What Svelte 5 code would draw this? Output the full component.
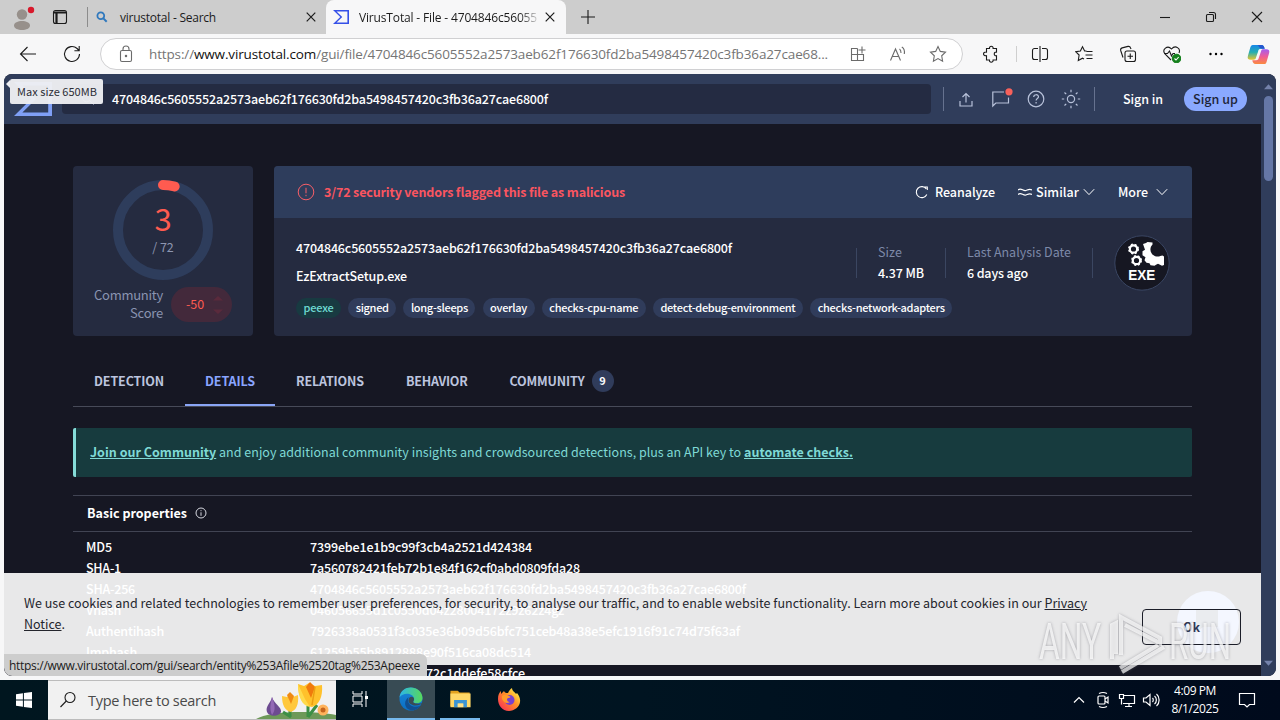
<script lang="ts">
	const hash = '4704846c5605552a2573aeb62f176630fd2ba5498457420c3fb36a27cae6800f';

	const tags = [
		{ name: 'peexe', width: 30, active: true },
		{ name: 'signed', width: 33 },
		{ name: 'long-sleeps', width: 57 },
		{ name: 'overlay', width: 37 },
		{ name: 'checks-cpu-name', width: 89 },
		{ name: 'detect-debug-environment', width: 135 },
		{ name: 'checks-network-adapters', width: 127 }
	];

	const tabs = [
		{ name: 'DETECTION', width: 70 },
		{ name: 'DETAILS', width: 50, active: true },
		{ name: 'RELATIONS', width: 68 },
		{ name: 'BEHAVIOR', width: 61.5 },
		{ name: 'COMMUNITY', width: 75, count: 9 }
	];

	const properties = [
		{ label: 'MD5', lw: 26, value: '7399ebe1e1b9c99f3cb4a2521d424384', width: 222 },
		{ label: 'SHA-1', lw: 35, value: '7a560782421feb72b1e84f162cf0abd0809fda28', width: 270 },
		{ label: 'SHA-256', lw: 49, value: hash, width: 436 },
		{ label: 'Vhash', lw: 35, value: '046056655d1c0550d04z28004172z9z62z4gz', width: 254 },
		{
			label: 'Authentihash',
			lw: 78,
			value: '7926338a0531f3c035e36b09d56bfc751ceb48a38e5efc1916f91c74d75f63af',
			width: 430
		},
		{ label: 'Imphash', lw: 51, value: '61259b55b8912888e90f516ca08dc514', width: 221 }
	];

	// spreads the letters so a label takes exactly the given width
	function fit(node: HTMLElement, width: number) {
		const natural = node.getBoundingClientRect().width;
		const count = (node.textContent ?? '').length;
		node.style.letterSpacing = `${(width - natural) / count}px`;
	}
</script>

{#snippet vtLogo()}
	<svg viewBox="0 1.32 24 21.36" preserveAspectRatio="none" fill="currentColor">
		<path d="M10.87 12L0 22.68h24V1.32H0zm10.73 8.52H5.28l8.637-8.52L5.28 3.48H21.6z" />
	</svg>
{/snippet}

{#snippet cross()}
	<svg class="cross" viewBox="0 0 10 10"><path d="M.7.7l8.6 8.6M9.3.7L.7 9.3" /></svg>
{/snippet}

{#snippet chevron()}
	<svg class="chevron" viewBox="0 0 12 8"><path d="M.8 1.2L6 6.6l5.2-5.4" /></svg>
{/snippet}

<div class="desktop">
	<div class="tabstrip">
		<svg class="profile" viewBox="0 0 24 28">
			<circle cx="11" cy="10.500" r="5.2" fill="#97908b" />
			<path d="M3 21.500c0-6 16-6 16 0 0 6-16 6-16 0z" fill="#97908b" />
			<circle cx="20" cy="6" r="3.2" fill="#d8192b" />
		</svg>
		<svg class="workspaces line" viewBox="0 0 16 16">
			<rect x="1.5" y="1.5" width="13" height="13" rx="2" />
			<path d="M2 3.500h12M4.500 3v11" stroke-width="2.200" />
		</svg>
		<i class="strip-sep"></i>
		<div class="tab idle">
			<svg class="favicon small" viewBox="0 0 12 12">
				<circle cx="4.8" cy="4.8" r="3.4" fill="none" stroke="#2f78bd" stroke-width="1.8" />
				<path d="M7.4 7.4l3.3 3.3" stroke="#2f78bd" stroke-width="2" />
			</svg>
			<span class="title" use:fit={96}>virustotal - Search</span>
			{@render cross()}
		</div>
		<div class="tab current">
			<span class="favicon vt">{@render vtLogo()}</span>
			<span class="title faded"><span class="t" use:fit={178}>VirusTotal - File - 4704846c56055</span></span>
			{@render cross()}
		</div>
		<svg class="plus line" viewBox="0 0 16 16"><path d="M8 1v14M1 8h14" /></svg>
		<div class="window-buttons">
			<span><svg class="line" viewBox="0 0 12 12"><path d="M1 6.5h10" /></svg></span>
			<span>
				<svg class="line" viewBox="0 0 12 12">
					<rect x="1.5" y="3.5" width="7" height="7" rx="1" />
					<path d="M4 1.5h4.5a2 2 0 0 1 2 2V8" />
				</svg>
			</span>
			<span><svg class="line" viewBox="0 0 12 12"><path d="M1 1l10 10M11 1L1 11" /></svg></span>
		</div>
	</div>

	<div class="toolbar">
		<span class="cell nav"><svg class="line" viewBox="0 0 20 20"><path d="M18 10H3M9.5 3L2.5 10l7 7" /></svg></span>
		<span class="cell nav">
			<svg class="line" viewBox="0 0 20 20"><path d="M17.5 10a7.5 7.5 0 1 1-2.4-5.5L17 6.5M17.2 2v4.8h-4.8" /></svg>
		</span>
		<div class="address">
			<svg class="lock line" viewBox="0 0 16 18">
				<rect x="2.5" y="5.5" width="11" height="11" rx="1.5" />
				<path d="M5 5.5V4a3 3 0 0 1 6 0v1.5" />
				<circle cx="8" cy="11" r=".7" fill="#555" />
			</svg>
			<span class="url"><span class="t" use:fit={679}>https://<b>www.virustotal.com</b>/gui/file/4704846c5605552a2573aeb62f176630fd2ba5498457420c3fb36a27cae68...</span></span>
			<span class="cell">
				<svg class="line" viewBox="0 0 18 18">
					<path d="M8.500 3.500h-6v12h12v-6h-12M8.500 3.500v12M13 1.500v7M9.500 5h7" />
				</svg>
			</span>
			<span class="cell">
				<svg class="line" viewBox="0 0 18 18">
					<path d="M1.500 15.500L6.500 4l5 11.500M3.200 11.500h6.600M10.500 4c1.500 1 1.500 2.500 1.500 4M12.800 2c2.500 1.500 3 4 2.500 7" />
				</svg>
			</span>
			<span class="cell">
				<svg class="line" viewBox="0 0 18 18">
					<path d="M9 1.500l2.300 4.900 5.200.7-3.800 3.700.9 5.400L9 13.600l-4.600 2.600.9-5.400L1.500 7.100l5.200-.7z" />
				</svg>
			</span>
		</div>
		<span class="cell puzzle">
			<svg class="line dark" viewBox="0 0 18 18">
				<path d="M4.500 3.500h3c-.6-3 4.200-3 3.600 0h3.400v3.600c-3-.6-3 4.200 0 3.600v4.300h-3.400c.4 3-4.200 3-3.600 0h-3v-4.300c-4 .4-4-4 0-3.600z" />
			</svg>
		</span>
		<i class="tool-sep"></i>
		<span class="cell">
			<svg class="line dark" viewBox="0 0 18 18">
				<path d="M7 3.500H3.500a2 2 0 0 0-2 2v7a2 2 0 0 0 2 2H7M9 1v16M11 3.500h3.500a2 2 0 0 1 2 2v7a2 2 0 0 1-2 2H11" />
			</svg>
		</span>
		<span class="cell">
			<svg class="line dark" viewBox="0 0 18 18">
				<path d="M11.500 6H9.600L7.500 1.700 5.400 6l-4.700.7 3.400 3.300-.8 5.500 4.200-2.300 1.500.8M11.500 6.500h6M10.500 10h7M11.500 13.500h6" />
			</svg>
		</span>
		<span class="cell">
			<svg class="line dark" viewBox="0 0 18 18">
				<rect x="6" y="6" width="10.500" height="10.500" rx="2" />
				<path d="M4 12.500L1.700 5.500c-.4-1.400.2-2.200 1.500-2.600L9 1.400c1.500-.3 2.200.4 2.600 1.600l.4 1M11.250 8.500v5.500M8.500 11.250H14" />
			</svg>
		</span>
		<span class="cell">
			<svg class="line dark" viewBox="0 0 18 18">
				<path d="M8 15L2 9C-1.500 4.500 4.500-.5 8.500 4c4-4.500 9.500-.5 7.500 4M1 8.500h3.500l2-2.500 2 5 1.500-2.500H12" />
				<circle cx="13.500" cy="13.500" r="4.200" fill="#15801d" stroke="#15801d" />
				<path d="M11.500 13.500l1.500 1.500 2.700-3" stroke="#fff" />
			</svg>
		</span>
		<span class="cell">
			<svg viewBox="0 0 18 18"><circle cx="3.500" cy="9" r="1.200" /><circle cx="9" cy="9" r="1.200" /><circle cx="14.500" cy="9" r="1.200" /></svg>
		</span>
		<span class="cell copilot">
			<svg viewBox="0 0 24 22">
				<defs>
					<linearGradient id="cpa" x1="0" y1="0" x2="0" y2="1"><stop offset="0" stop-color="#1686e8" /><stop offset=".5" stop-color="#27aeb0" /><stop offset="1" stop-color="#e8c52e" /></linearGradient>
					<linearGradient id="cpb" x1="0" y1="0" x2="0" y2="1"><stop offset="0" stop-color="#a45cf0" /><stop offset=".5" stop-color="#ef5c98" /><stop offset="1" stop-color="#fb8b3f" /></linearGradient>
				</defs>
				<path d="M6 1h9c2.500 0 3 2 3.500 4h-4c-2 0-2.500 1-3 3l-2 6c-.5 2-1 2.500-3 2.500H4c-3 0-4-1.500-3-4.500L3.500 3.500C4 2 4.500 1 6 1z" fill="url(#cpa)" />
				<path d="M15 1c2.500 0 3 2 3.500 4h-4c-1 0-2-3-3.500-4z" fill="#2456cf" />
				<path d="M18 21H9c-2.500 0-3-2-3.500-4h4c2 0 2.500-1 3-3l2-6c.5-2 1-2.500 3-2.500H20c3 0 4 1.500 3 4.500l-2.500 8.500C20 20 19.500 21 18 21z" fill="url(#cpb)" />
			</svg>
		</span>
	</div>

	<div class="viewport">
		<div class="page">
			<header>
				<span class="brand">{@render vtLogo()}</span>
				<div class="search">
					<svg class="glass" viewBox="0 0 16 16"><circle cx="6" cy="6" r="4.500" /><path d="M9.500 9.500l4 4" /></svg>
					<span class="t up" use:fit={436}>{hash}</span>
				</div>
				<i class="bar-sep"></i>
				<svg class="hicon" viewBox="0 0 20 20"><path d="M10 13.500V5M6.500 8L10 4.500 13.500 8M4 12v5h12v-5" /></svg>
				<svg class="hicon" viewBox="0 0 20 20">
					<path d="M13 3H1.800v14l3-3H17.500V8.500" />
					<circle cx="18" cy="2.800" r="3.600" fill="#f7615b" stroke="none" />
				</svg>
				<svg class="hicon" viewBox="0 0 20 20">
					<circle cx="10" cy="10" r="7.800" />
					<path d="M7.700 8c0-3 4.800-3 4.800-.2 0 1.800-2.400 1.700-2.400 3.700M10.100 13v1.500" />
				</svg>
				<svg class="hicon" viewBox="0 0 20 20">
					<circle cx="10" cy="10" r="3.600" />
					<path d="M10 .8v2.400M10 16.800v2.400M.8 10h2.400M16.800 10h2.400M3.500 3.500l1.700 1.700M14.800 14.800l1.700 1.700M16.500 3.500l-1.700 1.700M5.200 14.800l-1.700 1.700" />
				</svg>
				<i class="bar-sep second"></i>
				<span class="signin"><span class="t up" use:fit={40}>Sign in</span></span>
				<span class="signup"><span class="t" use:fit={45}>Sign up</span></span>
			</header>

			<main>
				<div class="summary">
					<section class="card score">
						<div class="ring">
							<svg viewBox="0 0 100 100">
								<circle cx="50" cy="50" r="45" stroke="#2e3d5c" />
								<path d="M50 5a45 45 0 0 1 11.650 1.530" stroke="#ff5b50" stroke-linecap="round" />
							</svg>
							<div class="count">
								<strong>3</strong>
								<span>/ 72</span>
							</div>
						</div>
						<div class="community">
							<div class="community-label">
								<span class="t" use:fit={69}>Community</span>
								<span class="t" use:fit={33}>Score</span>
							</div>
							<div class="votes">
								<span class="t up" use:fit={18}>-50</span>
								<svg viewBox="0 0 10 18"><path d="M0 4.500L5 0l5 4.500zM0 13.500L5 18l5-4.500z" /></svg>
							</div>
						</div>
					</section>

					<section class="card file">
						<div class="verdict">
							<svg class="alert" viewBox="0 0 18 18"><circle cx="9" cy="9" r="7.800" /><path d="M9 4.800v5.500M9 11.800v1.400" /></svg>
							<span class="warn up"><span class="t" use:fit={301}>3/72 security vendors flagged this file as malicious</span></span>
							<svg class="act" viewBox="0 0 14 14"><path d="M11.800 9.500a5.500 5.500 0 1 1-.5-5.600M8.500 2h3.800v3" /></svg>
							<span class="t up reanalyze" use:fit={60}>Reanalyze</span>
							<svg class="act waves" viewBox="0 0 14 10"><path d="M0 3c3-3 5 1.500 8 .5 2-.7 3.500-2 6-.5M0 7.500c3-3 5 1.500 8 .5 2-.7 3.500-2 6-.5" /></svg>
							<span class="t up" use:fit={43}>Similar</span>
							{@render chevron()}
							<span class="t up more" use:fit={30}>More</span>
							{@render chevron()}
						</div>
						<div class="details">
							<div class="identity">
								<span class="t" use:fit={436}>{hash}</span>
								<span class="t name" use:fit={111}>EzExtractSetup.exe</span>
								<div class="tags">
									{#each tags as tag}
										<span class="tag" class:active={tag.active}><span class="t" use:fit={tag.width}>{tag.name}</span></span>
									{/each}
								</div>
							</div>
							<div class="facts">
								<div class="fact">
									<span class="t" use:fit={24}>Size</span>
									<b class="t" use:fit={46}>4.37 MB</b>
								</div>
								<div class="fact">
									<span class="t" use:fit={104}>Last Analysis Date</span>
									<b class="t" use:fit={61}>6 days ago</b>
								</div>
								<div class="kind">
									<svg viewBox="0 0 56 56">
										<circle cx="28" cy="28" r="27.200" fill="#161722" stroke="#3a4663" />
										<g fill="none" stroke="#fff" stroke-width="2.200">
											<circle cx="19.500" cy="14" r="3.700" />
											<circle cx="22.500" cy="25.500" r="3.700" />
										</g>
										<g fill="none" stroke="#fff" stroke-width="1.600" stroke-dasharray="1.900 1.900">
											<circle cx="19.500" cy="14" r="4.700" />
											<circle cx="22.500" cy="25.500" r="4.700" />
										</g>
										<path d="M29 9l3-1 1.500-1 5 .5v2c-4 4-2 11 4 12 3 .5 4-1 6-1l1.500 1v8.500l-2 .8-4-2-2 1-1.500 1-4-.5-1-2-3-.5-2-2.500 1-3-3-2v-4l2.500-1.500z" fill="#fff" />
										<text x="14.300" y="44.500" textLength="27" lengthAdjust="spacingAndGlyphs">EXE</text>
									</svg>
								</div>
							</div>
						</div>
					</section>
				</div>

				<nav>
					{#each tabs as tab}
						<span class="section-tab" class:active={tab.active}>
							<span class="t up" use:fit={tab.width}>{tab.name}</span>
							{#if tab.count}<em>{tab.count}</em>{/if}
						</span>
					{/each}
				</nav>

				<div class="banner">
					<span class="t" use:fit={763}><b>Join our Community</b> and enjoy additional community insights and crowdsourced detections, plus an API key to <b>automate checks.</b></span>
				</div>

				<div class="heading">
					<span class="t up" use:fit={100}>Basic properties</span>
					<svg viewBox="0 0 12 12"><circle cx="6" cy="6" r="5" /><path d="M6 5.300v3.500M6 3.200v1" /></svg>
				</div>
				<div class="table">
					{#each properties as row}
						<div class="row">
							<span class="label"><span class="t" use:fit={row.lw}>{row.label}</span></span>
							<span class="t" use:fit={row.width}>{row.value}</span>
						</div>
					{/each}
					<div class="row last"><span class="t" use:fit={99}>72c1ddefe58cfce</span></div>
				</div>
			</main>

			<svg class="chat" viewBox="0 0 64 64">
				<circle cx="32" cy="32" r="31" fill="#8aa9ff" />
				<path d="M20 20h22v17H27l-7 6z" fill="#303c5a" />
			</svg>
			<div class="cookies">
				<p>
					<span class="t" use:fit={1063}>We use cookies and related technologies to remember user preferences, for security, to analyse our traffic, and to enable website functionality. Learn more about cookies in our <u>Privacy</u></span>
					<span class="t" use:fit={41}><u>Notice</u>.</span>
				</p>
				<button>Ok</button>
			</div>
		</div>
		<div class="scrollbar">
			<svg viewBox="0 0 10 6"><path d="M0 5.500L5 0l5 5.500z" /></svg>
			<i></i>
			<svg viewBox="0 0 10 6"><path d="M0 .5L5 6 10 .5z" /></svg>
		</div>
		<div class="tooltip"><span class="t" use:fit={80}>Max size 650MB</span></div>
		<div class="status"><span class="t" use:fit={411}>https://www.virustotal.com/gui/search/entity%253Afile%2520tag%253Apeexe</span></div>
	</div>

	<svg class="watermark" viewBox="0 0 200 70">
		<text x="3" y="51" textLength="62" lengthAdjust="spacingAndGlyphs">ANY</text>
		<text x="133" y="51" textLength="62" lengthAdjust="spacingAndGlyphs">RUN</text>
		<path d="M76 51V17l4-2v31M85 47V9l39 21v5L89 17" />
		<path d="M84 60l38-23M86 64l42-25" />
	</svg>

	<div class="taskbar">
		<span class="start">
			<svg viewBox="0 0 16 16" fill="#fff"><path d="M0 2.200L6.900 1.200v6.300H0zM7.900 1.100L16 0v7.500H7.900zM0 8.500h6.900v6.300L0 13.800zM7.900 8.500H16V16l-8.100-1.100z" /></svg>
		</span>
		<div class="find">
			<svg class="line dark" viewBox="0 0 18 18"><circle cx="11" cy="6.500" r="5" /><path d="M7.300 10L1.500 16" /></svg>
			<span class="t" use:fit={128}>Type here to search</span>
			<svg class="flowers" viewBox="0 0 80 38">
				<path d="M0 38c12-8 56-9 80-4v4z" fill="#6d9958" />
				<path d="M16 16c-1 6-7 9-5 15 2 5 12 5 14 0 1-5-7-8-9-15z" fill="#6d4b91" />
				<path d="M16 16c-1 6-3 11 0 18 4-5 3-10 0-18z" fill="#9369b5" />
				<path d="M34 36V29M52 36V25M52 36l9-12M35 36l-8-5" stroke="#3c8f45" stroke-width="3" fill="none" />
				<path d="M26 15l5 1 3-3 3 3 5-2c1 10-2 15-7 17-6-1-9-7-9-16z" fill="#ffc83d" />
				<path d="M31 14l3-3 4 4-3 8z" fill="#f08a12" />
				<path d="M42 3l6 2 5-3 6 3 7-1c1 12-3 20-10 22-9-1-14-10-14-23z" fill="#ffc12b" />
				<path d="M50 6l4-5 5 5-4 11z" fill="#f07a0c" />
				<path d="M42 3l7 15 5 8C46 25 42 16 42 3z" fill="#ffda4b" />
				<path d="M59 6l-3 18" stroke="#eb9d12" stroke-width="1.500" />
				<circle cx="67" cy="29" r="5.500" fill="#ffb35c" /><circle cx="67" cy="29" r="2.500" fill="#c6651d" />
			</svg>
		</div>
		<span class="app">
			<svg class="taskview" viewBox="0 0 18 18"><path d="M2 1v3h9V1M2 17v-3h9v3M2 6h9v6H2zM15 1v16" /><path d="M14 6h3v3h-3z" fill="#fff" stroke="none" /></svg>
		</span>
		<span class="app open edge">
			<svg viewBox="0 0 24 24">
				<defs>
					<linearGradient id="ea"><stop offset="0" stop-color="#2cb5e8" /><stop offset="1" stop-color="#58d95a" /></linearGradient>
					<linearGradient id="eb" x1="0" y1="0" x2="0" y2="1"><stop offset="0" stop-color="#1a86d8" /><stop offset="1" stop-color="#0b6fc4" /></linearGradient>
				</defs>
				<circle cx="12" cy="12" r="11.500" fill="url(#eb)" />
				<path d="M.5 10.500C2-3.500 23-2 23.500 11c0 5-6 6.500-9 4.500-1-1 1-1.500.5-4C14 6 4 5 .5 10.500z" fill="url(#ea)" />
				<path d="M9 13c0 6 7 8.500 12.500 5.500C19 23 13 24.500 9 22c-4-3-4-9 1-12-1 1-1 2-1 3z" fill="#124f91" />
				<path d="M10.500 10.500c2-1.500 4-.5 4.500 1 .4 2.500-1.500 3-.5 4 2 1.500 6 1.500 9 .5-4 4-13 3-14-2 0-1.500.3-2.500 1-3.500z" fill="#3a4b54" />
			</svg>
		</span>
		<span class="app running">
			<svg viewBox="0 0 24 24">
				<path d="M1 3h8l2 2h11v15H1z" fill="#e3a320" /><path d="M1 6h22v15H1z" fill="#ffd867" />
				<path d="M5 21v-8h14v8h-4v-4H9v4z" fill="#3b95d5" /><path d="M9 17h6v4H9z" fill="#ffe18a" />
			</svg>
		</span>
		<span class="app firefox">
			<svg viewBox="0 0 24 24">
				<defs><linearGradient id="ff" x1="1" y1="0" x2="0" y2="1"><stop offset=".1" stop-color="#fff04a" /><stop offset=".45" stop-color="#ff9026" /><stop offset="1" stop-color="#f8205f" /></linearGradient></defs>
				<path d="M1 12c0-4 1-6 3-8v3l3-3c1 2 2 2 4 2 1-2 2-4 4-5 0 3 3 4 4 6l1-1c8 10-1 18-8 18C5 24 1 18 1 12z" fill="url(#ff)" />
				<circle cx="12.500" cy="13" r="5" fill="#7741cf" />
				<path d="M5 9c3-2 5-1 7 0 2 .5 2 2-1 2-2 1-1 4 2 4-5 3-9-2-8-6z" fill="#ff9b2a" />
			</svg>
		</span>
		<div class="tray">
			<svg viewBox="0 0 18 18"><path d="M4 11.500l5-5 5 5" /></svg>
			<svg viewBox="0 0 18 18"><rect x="4" y="5" width="7" height="8" rx="1" /><path d="M11 8l3-2v6l-3-2M5 2.500c3-1.500 5-1.500 8 0M5 15.500c3 1.500 5 1.500 8 0" /></svg>
			<svg viewBox="0 0 18 18"><path d="M6 4.500h10.500v8H5M11 12.500v3M7 15.500h7M1.500 3.500h4v4h-4zM3.500 7.500v6" /></svg>
			<svg viewBox="0 0 18 18"><path d="M1.500 7v4h2.500l4 3.500v-11L4 7zM10.500 7c1 1 1 3 0 4M12.500 5c2.500 2 2.500 6 0 8M14.500 3c3.500 3 3.500 9 0 12" /></svg>
		</div>
		<div class="clock">
			<span class="t" use:fit={42}>4:09 PM</span>
			<span class="t" use:fit={47}>8/1/2025</span>
		</div>
		<svg class="notify" viewBox="0 0 18 18"><path d="M1.500 2.500h15v11h-5L9 16l-2.500-2.500h-5z" /></svg>
	</div>
</div>

<style>
	:global(body) {
		margin: 0;
		overflow: hidden;
	}
	.desktop {
		position: relative;
		display: flex;
		flex-direction: column;
		width: 1280px;
		height: 720px;
		overflow: hidden;
		background: #f7f7f8;
		font-family: 'Open Sans', 'Noto Sans', sans-serif;
		font-size: 12px;
		color: #1b1b1b;
	}
	.desktop :global(*) {
		box-sizing: border-box;
	}
	svg {
		display: block;
		flex: none;
	}
	.t,
	.title {
		display: inline-block;
		flex: none;
		white-space: nowrap;
	}
	.up {
		padding-bottom: 2px;
	}
	.line {
		fill: none;
		stroke: #1b1b1b;
		stroke-width: 1.1;
	}

	/* browser chrome */
	.tabstrip {
		display: flex;
		align-items: center;
		height: 34px;
		padding-left: 11px;
		background: #cdcdcd;
	}
	.profile {
		width: 24px;
		height: 28px;
		margin-top: 1px;
	}
	.workspaces {
		width: 16px;
		height: 16px;
		margin-left: 17px;
	}
	.strip-sep {
		width: 1px;
		height: 20px;
		margin-left: 19px;
		background: #8c8c8c;
	}
	.tab {
		display: flex;
		align-items: center;
		height: 34px;
	}
	.tab.idle {
		width: 238px;
		padding: 0 10px 0 8px;
	}
	.tab.current {
		width: 240px;
		padding: 0 11px 0 7px;
		border-radius: 8px 8px 0 0;
		background: #f7f7f8;
	}
	.favicon.small {
		width: 12px;
		height: 12px;
		margin-right: 12px;
	}
	.favicon.vt {
		margin-right: 10px;
		color: #3550e8;
	}
	.favicon.vt svg {
		width: 16px;
		height: 14px;
	}
	.title.faded {
		mask-image: linear-gradient(90deg, #000 160px, transparent 182px);
	}
	.cross {
		width: 10px;
		height: 10px;
		margin-left: auto;
		fill: none;
		stroke: #1b1b1b;
		stroke-width: 1.2;
	}
	.plus {
		width: 16px;
		height: 16px;
		margin-left: 14px;
	}
	.window-buttons {
		display: flex;
		margin-left: auto;
	}
	.window-buttons span {
		display: grid;
		place-items: center;
		width: 46px;
	}
	.window-buttons svg {
		width: 12px;
		height: 12px;
	}
	.toolbar {
		display: flex;
		align-items: center;
		height: 40px;
		padding-left: 6px;
	}
	.cell {
		display: grid;
		flex: none;
		place-items: center;
		width: 44px;
	}
	.cell svg {
		width: 18px;
		height: 18px;
	}
	.cell.nav svg {
		width: 20px;
		height: 20px;
	}
	.cell.puzzle {
		margin-left: 6px;
	}
	.cell.copilot svg {
		width: 23px;
		height: 21px;
		margin-right: 4px;
	}
	.tool-sep {
		flex: none;
		width: 1px;
		height: 16px;
		margin: 0 1px 0 3px;
		background: #cfcfcf;
	}
	.address {
		display: flex;
		flex: none;
		align-items: center;
		width: 863px;
		height: 32px;
		margin-left: 6px;
		padding: 0 4px 0 17px;
		border: 1px solid #d0d0d2;
		border-radius: 16px;
		background: #fff;
	}
	.address .line {
		stroke: #6b6b6b;
	}
	.address .cell {
		width: 40px;
	}
	.lock {
		width: 16px;
		height: 18px;
	}
	.url {
		flex: 1;
		margin-left: 15px;
		font-size: 13.5px;
		color: #757575;
	}
	.url b {
		font-weight: 400;
		color: #111;
	}

	/* page */
	.viewport {
		position: relative;
		display: flex;
		height: 602px;
		margin: 0 4px;
		overflow: hidden;
		border-radius: 8px;
		background: #161723;
		font-family: 'Noto Sans CJK SC', 'Noto Sans', sans-serif;
		font-size: 12.5px;
		font-weight: 500;
		color: #fff;
	}
	.page {
		position: relative;
		width: 1257px;
	}
	header {
		display: flex;
		align-items: center;
		height: 50px;
		padding-left: 10px;
		background: #303d5b;
	}
	.brand {
		color: #7f9ff5;
	}
	.brand svg {
		width: 38px;
		height: 34px;
	}
	.search {
		display: flex;
		align-items: center;
		width: 869px;
		height: 30px;
		margin-left: 10px;
		padding-left: 19px;
		border-radius: 4px;
		background: #242b42;
	}
	.glass {
		width: 15px;
		height: 15px;
		margin-right: 16px;
		fill: none;
		stroke: #a6b1cc;
	}
	.bar-sep {
		width: 1px;
		height: 24px;
		margin: 0 12px;
		background: #66728f;
	}
	.bar-sep.second {
		margin: 0 28px 0 -2px;
	}
	.hicon {
		width: 20px;
		height: 20px;
		margin-right: 15px;
		overflow: visible;
		fill: none;
		stroke: #b8c2da;
		stroke-width: 1.2;
	}
	.signup {
		width: 63px;
		height: 24px;
		margin-left: 21px;
		border-radius: 12px;
		background: #8aa9ff;
		color: #1d2438;
		line-height: 23px;
		text-align: center;
	}
	main {
		width: 1119px;
		margin: 42px 0 0 69px;
	}
	.summary {
		display: flex;
		justify-content: space-between;
		height: 170px;
	}
	.card {
		border-radius: 4px;
		background: #252b40;
	}
	.score {
		width: 180px;
		padding-top: 14px;
	}
	.ring {
		display: grid;
		place-items: center;
		height: 100px;
	}
	.ring > * {
		grid-area: 1 / 1;
	}
	.ring svg {
		width: 100px;
		height: 100px;
		fill: none;
		stroke-width: 10;
	}
	.count {
		display: flex;
		flex-direction: column;
		align-items: center;
		font-weight: 400;
	}
	.count strong {
		margin: -4px 0 3px;
		font-size: 31px;
		font-weight: 400;
		line-height: 34px;
		color: #ff5b50;
	}
	.count span {
		line-height: 18px;
		color: #8d96b0;
	}
	.community {
		display: flex;
		align-items: center;
		justify-content: flex-end;
		gap: 8px;
		height: 36px;
		margin-top: 6px;
		padding-right: 21px;
		font-weight: 400;
	}
	.community-label {
		display: flex;
		flex-direction: column;
		align-items: flex-end;
		font-size: 13px;
		line-height: 18px;
		color: #8a94b0;
	}
	.votes {
		display: flex;
		align-items: center;
		justify-content: space-between;
		width: 61px;
		height: 35px;
		margin-top: 1px;
		padding: 0 9px 0 15px;
		border-radius: 18px;
		background: #43293b;
		color: #ff5b50;
	}
	.votes svg {
		width: 10px;
		height: 18px;
		fill: #5a2a3c;
	}
	.file {
		width: 918px;
	}
	.verdict {
		display: flex;
		align-items: center;
		height: 52px;
		padding: 0 24px 0 23px;
		border-radius: 4px 4px 0 0;
		background: #2e3d5c;
	}
	.alert {
		width: 18px;
		height: 18px;
		margin-right: 9px;
		fill: none;
		stroke: #f75f68;
	}
	.warn {
		flex: 1;
		font-weight: 700;
		color: #fa5560;
	}
	.act {
		width: 14px;
		height: 14px;
		margin-right: 6px;
		fill: none;
		stroke: #fff;
		stroke-width: 1.1;
	}
	.act.waves {
		height: 10px;
		margin-right: 4px;
	}
	.reanalyze {
		margin-right: 23px;
	}
	.more {
		margin: 0 8px 0 23px;
	}
	.chevron {
		width: 12px;
		height: 8px;
		margin-left: 4px;
		fill: none;
		stroke: #fff;
	}
	.more + .chevron {
		margin-left: 0;
	}
	.details {
		display: flex;
		justify-content: space-between;
		padding-left: 22px;
	}
	.identity {
		display: flex;
		flex-direction: column;
		align-items: flex-start;
		padding-top: 16px;
		line-height: 28px;
	}
	.tags {
		display: flex;
		gap: 7.2px;
		margin-top: 8px;
	}
	.tag {
		flex: none;
		height: 20px;
		padding: 0 7.5px;
		border-radius: 10px;
		background: #303c5b;
		font-size: 11px;
		line-height: 19px;
		white-space: nowrap;
	}
	.tag.active {
		background: #183a41;
		color: #6edbd3;
	}
	.facts {
		display: flex;
		width: 336px;
		margin: 17px 0 0 -120px;
	}
	.fact {
		display: flex;
		flex: none;
		flex-direction: column;
		align-items: flex-start;
		height: 56px;
		padding: 6px 21px 0 22px;
		line-height: 21px;
		background: linear-gradient(#3b4661, #3b4661) 0 13px / 1px 30px no-repeat;
	}
	.fact span {
		font-weight: 400;
		color: #7d89a8;
	}
	.fact b {
		font-weight: 500;
	}
	.kind {
		padding-left: 22px;
		background: linear-gradient(#3b4661, #3b4661) 0 13px / 1px 30px no-repeat;
	}
	.kind svg {
		width: 56px;
		height: 56px;
	}
	.kind text {
		fill: #fff;
		font: 700 14.5px 'Liberation Sans', sans-serif;
	}
	nav {
		display: flex;
		height: 49px;
		margin-top: 22px;
		border-bottom: 1px solid #474a58;
	}
	.section-tab {
		display: flex;
		align-items: center;
		height: 48px;
		padding: 0 21px;
		border-bottom: 2px solid transparent;
		font-size: 12.5px;
		font-weight: 700;
		color: #bcc4de;
	}
	.section-tab:nth-child(2) {
		padding: 0 20px;
	}
	.section-tab.active {
		border-bottom-color: #8aa5f5;
		color: #8aa5ff;
	}
	.section-tab em {
		width: 22px;
		height: 22px;
		margin-left: 7px;
		border-radius: 50%;
		background: #303c5b;
		color: #fff;
		font-size: 11px;
		font-style: normal;
		line-height: 21px;
		text-align: center;
	}
	.banner {
		height: 49px;
		margin-top: 21px;
		padding-left: 14px;
		border-left: 3px solid #85dcd8;
		border-radius: 2px;
		background: #173b3e;
		color: #7fd9d5;
		font-weight: 400;
		line-height: 47px;
	}
	.banner b {
		text-decoration: underline;
	}
	.heading {
		display: flex;
		align-items: center;
		height: 37px;
		margin-top: 18px;
		padding-left: 14px;
		border: solid #414453;
		border-width: 1px 0;
		font-weight: 700;
	}
	.heading svg {
		width: 12px;
		height: 12px;
		margin: -2px 0 0 8px;
		fill: none;
		stroke: #d6d8e0;
	}
	.table {
		padding-top: 5px;
	}
	.row {
		display: flex;
		height: 21px;
		padding-left: 13px;
		line-height: 20px;
	}
	.row.last {
		padding-left: 353px;
	}
	.label {
		width: 224px;
	}

	/* overlays */
	.chat {
		position: absolute;
		top: 516px;
		left: 1172px;
		width: 64px;
		height: 64px;
	}
	.cookies {
		position: absolute;
		top: 499px;
		left: 0;
		display: flex;
		align-items: flex-start;
		justify-content: space-between;
		width: 1257px;
		height: 92px;
		padding: 19px 20px;
		background: rgba(255, 255, 255, 0.9);
		color: #24252d;
		font-weight: 400;
	}
	.cookies p {
		display: flex;
		flex-direction: column;
		align-items: flex-start;
		margin: 0;
		line-height: 21px;
	}
	.cookies button {
		width: 99px;
		height: 36px;
		margin-top: 17px;
		padding: 0 0 2px;
		border: 1px solid #1b1d28;
		border-radius: 4px;
		background: none;
		color: #303652;
		font: 700 12.5px 'Noto Sans CJK SC', sans-serif;
	}
	.scrollbar {
		display: flex;
		flex: 1;
		flex-direction: column;
		align-items: center;
		padding: 10px 0;
		background: #303d5b;
	}
	.scrollbar svg {
		width: 9px;
		height: 6px;
		fill: #7482ab;
	}
	.scrollbar i {
		width: 9px;
		height: 85px;
		margin: 6px 0 auto;
		border-radius: 5px;
		background: #6577a6;
	}
	.tooltip {
		position: absolute;
		top: 5px;
		left: 6px;
		width: 93px;
		height: 25px;
		padding-left: 7px;
		border-radius: 2px;
		background: rgba(238, 239, 243, 0.96);
		color: #2c2d35;
		font-size: 11px;
		font-weight: 400;
		line-height: 25px;
	}
	.tooltip::before {
		position: absolute;
		top: 1px;
		left: -4px;
		border: solid transparent;
		border-width: 4px 4px 4px 0;
		border-right-color: #eeeff3;
		content: '';
	}
	.status {
		position: absolute;
		bottom: 0;
		left: 0;
		width: 423px;
		height: 22px;
		padding-left: 5px;
		border-radius: 0 6px 0 8px;
		background: #cdcdcd;
		color: #1b1b1b;
		font: 12px/23px 'Open Sans', sans-serif;
	}
	.watermark {
		position: absolute;
		top: 608px;
		left: 1036px;
		width: 200px;
		height: 70px;
		fill: rgba(255, 255, 255, 0.75);
		filter: drop-shadow(0 0 1.5px rgba(90, 90, 100, 0.6));
	}
	.watermark text {
		font: 400 50px Roboto, sans-serif;
	}
	.watermark path {
		fill: none;
		stroke: rgba(255, 255, 255, 0.7);
		stroke-width: 4;
	}

	/* taskbar */
	.taskbar {
		display: flex;
		height: 40px;
		margin-top: 4px;
		background: linear-gradient(90deg, #00161f, #001421 50%, #000a1c);
	}
	.start {
		display: grid;
		place-items: center;
		width: 48px;
	}
	.start svg {
		width: 16px;
		height: 16px;
	}
	.find {
		display: flex;
		align-items: center;
		width: 288px;
		padding-left: 11px;
		border: solid #bcbcbc;
		border-width: 1px 0;
		background: #f1f1f1;
		color: #4a4a4a;
		font-size: 14.5px;
	}
	.find > .dark {
		width: 18px;
		height: 18px;
		margin-right: 11px;
	}
	.find .flowers {
		width: 80px;
		height: 38px;
		margin-left: auto;
	}
	.app {
		display: grid;
		place-items: center;
		width: 49px;
		border-bottom: 2px solid transparent;
	}
	.app svg {
		width: 24px;
		height: 24px;
	}
	.app .taskview {
		width: 18px;
		height: 18px;
		margin-right: 2px;
		fill: none;
		stroke: #fff;
	}
	.app.open {
		width: 48px;
		margin-left: 2px;
		border-color: #76b9ed;
		background: #384b54;
	}
	.app.running {
		width: 40px;
		margin: 0 5px;
		border-color: #76b9ed;
	}
	.app.running svg {
		width: 23px;
		height: 22px;
	}
	.app.firefox {
		width: 47px;
	}
	.tray {
		display: flex;
		align-items: center;
		gap: 6px;
		margin-left: auto;
	}
	.tray svg,
	.notify {
		width: 18px;
		height: 18px;
		fill: none;
		stroke: #fff;
		stroke-width: 1.2;
	}
	.clock {
		display: flex;
		flex-direction: column;
		align-items: center;
		width: 48px;
		margin: 2px 19px 0 11px;
		line-height: 18px;
		color: #fff;
	}
	.notify {
		align-self: center;
		margin-right: 24px;
	}
</style>
